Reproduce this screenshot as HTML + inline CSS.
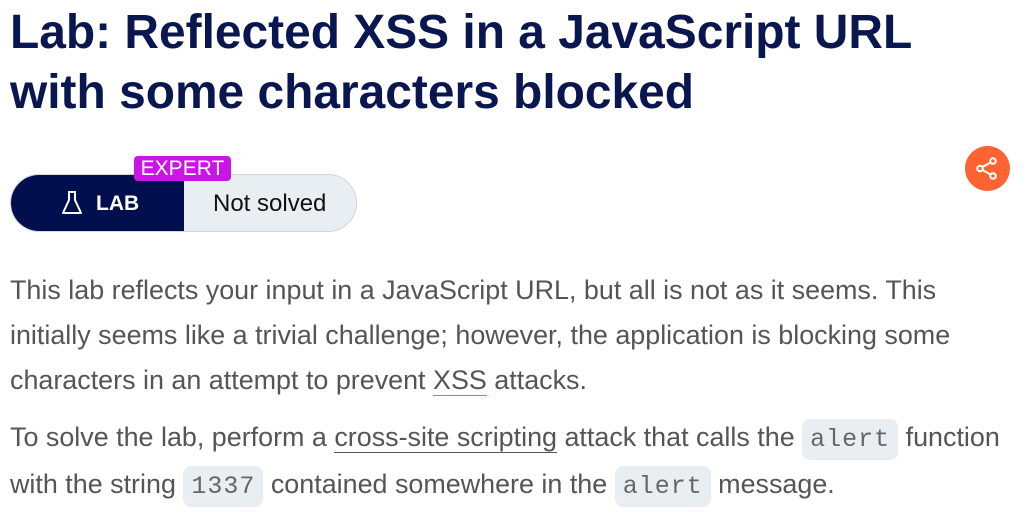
<!DOCTYPE html>
<html><head><meta charset="utf-8"><style>
body{margin:0;width:1031px;height:518px;overflow:hidden;background:#fff;font-family:"Liberation Sans",Arial,sans-serif;position:relative}
h1{position:absolute;left:10px;top:3px;margin:0;font-size:47.9px;line-height:60px;font-weight:bold;color:#0a1650;white-space:nowrap}
.pill{position:absolute;left:10px;top:174px;width:347px;height:58px;border-radius:29px;background:#e9eef2;border:1px solid #cfd6dc;box-sizing:border-box;overflow:hidden}
.dark{position:absolute;left:0;top:0;width:173px;height:100%;background:#010f4f;color:#fff;font-weight:bold;font-size:21px}
.dark span{position:absolute;left:85px;top:17px}
.ns{position:absolute;left:202px;top:15px;font-size:24px;color:#111}
.exp{position:absolute;left:134px;top:156px;width:97px;height:25px;background:#c915e6;color:#fff;border-radius:4px;font-size:21px;text-align:center;line-height:25px}
.share{position:absolute;left:965px;top:146px;width:45px;height:45px;border-radius:50%;background:#fe6432}
p{position:absolute;left:10px;margin:0;font-size:26.9px;line-height:45px;color:#555;white-space:nowrap}
a{color:#555;text-decoration:none;border-bottom:1px solid #555}
a.x{border-bottom:1px solid #fe6432}
code{font-family:"Liberation Mono",monospace;background:#e9eef2;border-radius:8px;padding:6px 8px;font-size:25px;color:#666;letter-spacing:1px}
</style></head><body>
<h1>Lab: Reflected XSS in a JavaScript URL<br>with some characters blocked</h1>
<div class="pill"><div class="dark">
<svg style="position:absolute;left:50px;top:16px" width="22" height="24" viewBox="0 0 22 24" fill="none" stroke="#fff" stroke-width="2" stroke-linejoin="round"><path d="M7 1h8M8 1v8L2 22h18L14 9V1"/></svg>
<span>LAB</span></div><div class="ns">Not solved</div></div>
<div class="exp">EXPERT</div>
<div class="share"><svg width="45" height="45" viewBox="0 0 45 45" fill="none" stroke="#fff" stroke-width="2"><circle cx="15" cy="22.5" r="2.8"/><circle cx="28" cy="15" r="2.8"/><circle cx="28" cy="30" r="2.8"/><path d="M17.5 21l8-4.5M17.5 24l8 4.5"/></svg></div>
<p style="top:268px">This lab reflects your input in a JavaScript URL, but all is not as it seems. This<br>initially seems like a trivial challenge; however, the application is blocking some<br>characters in an attempt to prevent <a class="x">XSS</a> attacks.</p>
<p style="top:415px">To solve the lab, perform a <a>cross-site scripting</a> attack that calls the <code>alert</code> function<br>with the string <code>1337</code> contained somewhere in the <code>alert</code> message.</p>
</body></html>
